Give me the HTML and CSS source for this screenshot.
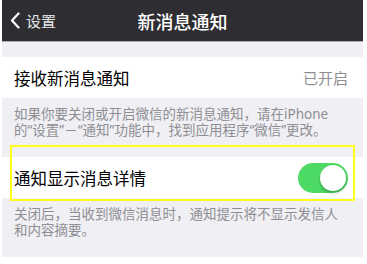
FILE: index.html
```html
<!DOCTYPE html>
<html lang="zh-CN">
<head>
  <meta charset="UTF-8">
  <meta name="viewport" content="width=device-width, initial-scale=1.0">
  <title>新消息通知</title>
  <link rel="stylesheet" href="styles.css">
</head>
<body>
  <div class="screen">
    <header class="navbar">
      <a class="back" href="#">
        <svg class="chevron" width="10" height="17" viewBox="0 0 10 17">
          <path d="M8.5 1.5 L2 8.5 L8.5 15.5" fill="none" stroke="#fff" stroke-width="2.2" stroke-linecap="round" stroke-linejoin="round"/>
        </svg>
        <span>设置</span>
      </a>
      <h1>新消息通知</h1>
    </header>

    <div class="gap"></div>

    <div class="cell">
      <span class="label">接收新消息通知</span>
      <span class="value">已开启</span>
    </div>
    <p class="note">如果你要关闭或开启微信的新消息通知，请在iPhone<br>的“设置”－“通知”功能中，找到应用程序“微信”更改。</p>

    <div class="cell highlight">
      <span class="label">通知显示消息详情</span>
      <span class="switch on"><span class="knob"></span></span>
    </div>
    <p class="note">关闭后，当收到微信消息时，通知提示将不显示发信人<br>和内容摘要。</p>
  </div>
</body>
</html>
```

FILE: styles.css
```css
/* Basic Reset */
* { margin: 0; padding: 0; box-sizing: border-box; }
body {
  font-family: "Noto Sans", "Noto Sans CJK SC", sans-serif;
  background: #fff;
  color: #000;
}
.screen {
  margin-left: 2px;
  width: 361px;
  background: #efeff4;
}
.navbar {
  height: 42px;
  background: #2e2e32;
  border-bottom: 1px solid #a9a9ae;
  position: relative;
  display: flex;
  align-items: center;
}
.back {
  display: flex;
  align-items: center;
  gap: 6px;
  padding-left: 8px;
  color: #e6e6e6;
  font-size: 15px;
  text-decoration: none;
  z-index: 1;
}
.navbar h1 {
  position: absolute;
  left: 0;
  right: 0;
  text-align: center;
  font-size: 18px;
  font-weight: 500;
  color: #fff;
}
.gap {
  height: 15px;
}
.cell {
  height: 41px;
  background: #fff;
  display: flex;
  align-items: center;
  justify-content: space-between;
  padding: 0 14px 0 12px;
}
.cell .label {
  font-size: 16.5px;
}
.cell .value {
  font-size: 15px;
  color: #8e8e93;
  padding-right: 1px;
}
.note {
  font-size: 13.5px;
  line-height: 16px;
  color: #8e8e93;
  white-space: nowrap;
  padding: 8px 10px 19px 12px;
}
.highlight {
  position: relative;
}
.highlight::after {
  content: "";
  position: absolute;
  top: -12px;
  bottom: -3px;
  left: 8px;
  right: 8px;
  border: 2px solid #ffff1a;
}
.switch {
  width: 50px;
  height: 30px;
  border-radius: 15px;
  background: #4cd964;
  display: flex;
  align-items: center;
  justify-content: flex-end;
  padding: 2px;
  margin-right: 1px;
}
.knob {
  width: 26px;
  height: 26px;
  border-radius: 50%;
  background: #fff;
  box-shadow: 0 2px 3px rgba(0,0,0,0.25);
}
```
